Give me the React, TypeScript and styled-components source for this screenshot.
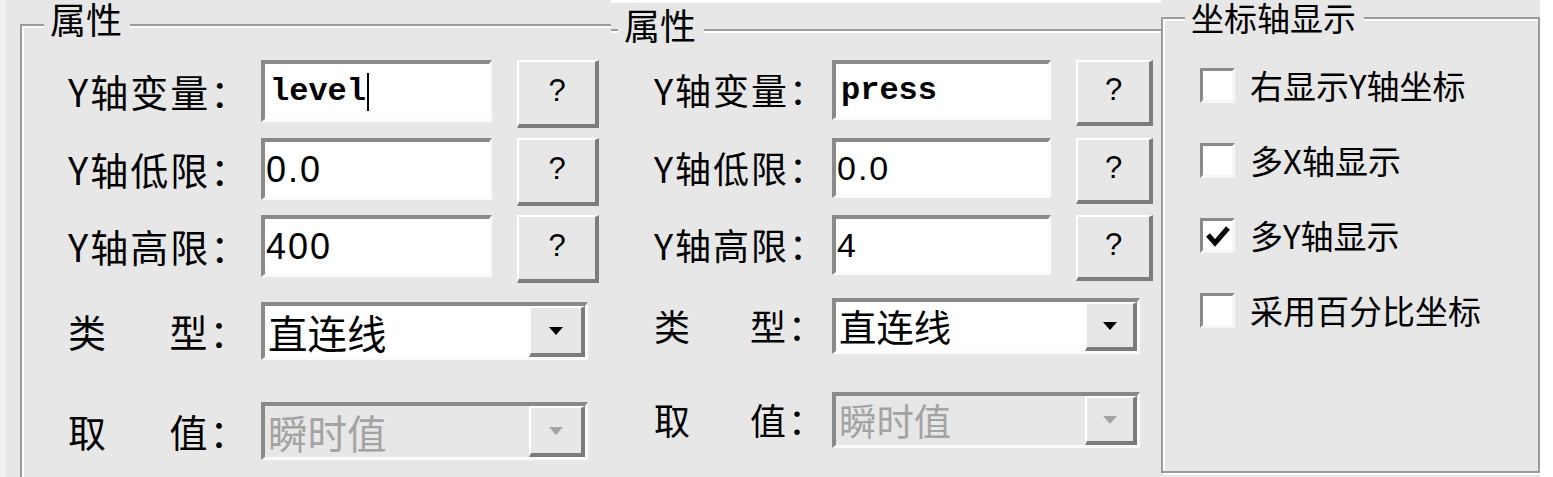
import React from 'react'
import styled, { createGlobalStyle } from 'styled-components'

const face = '#e7e7e7'
const shade = '#9c9c9c'
const light = '#ffffff'
const sunk = '#8a8a8a'
const dark = '#7c7c7c'
const cjk = '"Noto Sans CJK SC", "Liberation Sans", sans-serif'

const GlobalStyle = createGlobalStyle`
  html, body {
    margin: 0;
    padding: 0;
    background: #ffffff;
  }
  body {
    font-family: ${cjk};
  }
`

const Dialog = styled.main`
  display: flex;
  width: 1553px;
  height: 477px;
  overflow: hidden;
  box-sizing: border-box;
  border-left: 6px solid #f1f1f1;
  background: ${face};
  color: #000;
  font-family: ${cjk};
`

const Column = styled.div<{ $w: number; $pl?: number }>`
  display: flex;
  flex-direction: column;
  flex: none;
  width: ${(p) => p.$w}px;
  padding-left: ${(p) => p.$pl ?? 0}px;
  box-sizing: border-box;
`

const Margin = styled.div`
  flex: 1;
  background: #ffffff;
`

const Ledge = styled.div`
  flex: none;
  height: 3px;
  background: #ffffff;
`

const Group = styled.section<{ $size: number }>`
  display: flex;
  flex-direction: column;
  flex: 1;
  font-size: ${(p) => p.$size}px;
`

const Head = styled.header<{ $h: number }>`
  display: flex;
  align-items: flex-start;
  flex: none;
  height: ${(p) => p.$h}px;
`

const Corner = styled.span<{ $top: number; $w: number; $right?: boolean }>`
  flex: none;
  align-self: stretch;
  width: ${(p) => p.$w}px;
  margin-top: ${(p) => p.$top}px;
  border-top: 2px solid ${shade};
  ${(p) =>
    p.$right
      ? `border-right: 2px solid ${shade}; box-shadow: inset 0 2px 0 ${light}, 2px 0 0 ${light};`
      : `border-left: 2px solid ${shade}; box-shadow: inset 2px 2px 0 ${light};`}
`

const Rule = styled.span<{ $top: number; $w?: number }>`
  flex: ${(p) => (p.$w ? 'none' : '1')};
  width: ${(p) => (p.$w ? `${p.$w}px` : 'auto')};
  height: 0;
  margin-top: ${(p) => p.$top}px;
  border-top: 2px solid ${shade};
  border-bottom: 2px solid ${light};
`

const Title = styled.h2<{ $top: number; $size: number }>`
  flex: none;
  margin: ${(p) => p.$top}px 0 0 0;
  padding: 0 8px 0 6px;
  font-family: "Liberation Sans", "Noto Sans CJK SC", sans-serif;
  font-size: ${(p) => p.$size}px;
  font-weight: 400;
  line-height: ${(p) => p.$size + 4}px;
  white-space: nowrap;
`

const Body = styled.div<{ $pl: number; $open?: boolean; $boxed?: boolean }>`
  flex: 1;
  display: flex;
  flex-direction: column;
  padding-left: ${(p) => p.$pl}px;
  ${(p) =>
    p.$boxed
      ? `border: 2px solid ${shade}; border-top: 0; box-shadow: inset 2px 0 0 ${light}, 2px 2px 0 ${light}; margin-bottom: 4px;`
      : p.$open
        ? ''
        : `border-left: 2px solid ${shade}; box-shadow: inset 2px 0 0 ${light};`}
`

const Row = styled.div<{ $top: number }>`
  display: flex;
  align-items: flex-start;
  flex: none;
  margin-top: ${(p) => p.$top}px;
`

const Label = styled.label<{ $w: number; $h: number }>`
  flex: none;
  display: flex;
  align-items: center;
  width: ${(p) => p.$w}px;
  height: ${(p) => p.$h}px;
`

const LabelText = styled.span`
  display: flex;
  justify-content: space-between;
  width: 4.78em;
  letter-spacing: 2px;
  line-height: 1.2;
  white-space: nowrap;
`

const Edit = styled.div<{ $w: number; $h: number; $mono?: boolean; $digits: number }>`
  box-sizing: border-box;
  flex: none;
  display: flex;
  align-items: center;
  width: ${(p) => p.$w}px;
  height: ${(p) => p.$h}px;
  padding-left: ${(p) => (p.$mono ? 5 : 1)}px;
  background: #ffffff;
  border-style: solid;
  border-width: 4px 3px 3px 4px;
  border-color: ${sunk} #fbfbfb #fbfbfb ${sunk};
  font-family: ${(p) => (p.$mono ? '"Liberation Mono", monospace' : '"Liberation Sans", sans-serif')};
  font-size: ${(p) => (p.$mono ? 32 : p.$digits)}px;
  font-weight: ${(p) => (p.$mono ? 700 : 400)};
  letter-spacing: ${(p) => (p.$mono ? 0 : 2)}px;
  white-space: pre;
`

const Caret = styled.span`
  display: inline-block;
  width: 2px;
  height: 38px;
  margin-left: 1px;
  background: #000;
`

const HelpButton = styled.button<{ $w: number; $h: number }>`
  box-sizing: border-box;
  flex: none;
  width: ${(p) => p.$w}px;
  height: ${(p) => p.$h}px;
  margin: 0 0 0 25px;
  padding: 0 0 5px 0;
  background: ${face};
  border-style: solid;
  border-width: 2px 4px 4px 2px;
  border-color: ${light} ${dark} ${dark} ${light};
  color: #000;
  font-family: "Liberation Sans", sans-serif;
  font-size: 31px;
  line-height: 1;
`

const Combo = styled.div<{ $w: number; $h: number; $off?: boolean }>`
  box-sizing: border-box;
  flex: none;
  display: flex;
  width: ${(p) => p.$w}px;
  height: ${(p) => p.$h}px;
  background: ${(p) => (p.$off ? face : '#ffffff')};
  border-style: solid;
  border-width: 4px 3px 3px 4px;
  border-color: ${sunk} #fbfbfb #fbfbfb ${sunk};
  color: ${(p) => (p.$off ? '#a3a3a3' : '#000')};
`

const ComboText = styled.span`
  flex: 1;
  display: flex;
  align-items: center;
  padding-left: 3px;
  font-size: 1.04em;
  line-height: 1.2;
  white-space: nowrap;
`

const DropButton = styled.span<{ $w: number }>`
  box-sizing: border-box;
  flex: none;
  display: flex;
  align-items: center;
  justify-content: center;
  width: ${(p) => p.$w}px;
  background: ${face};
  border-style: solid;
  border-width: 2px 4px 4px 2px;
  border-color: ${light} ${dark} ${dark} ${light};
`

const Options = styled.ul`
  display: flex;
  flex-direction: column;
  margin: 0;
  padding: 0;
  list-style: none;
`

const Option = styled.li<{ $top: number }>`
  display: flex;
  align-items: center;
  gap: 15px;
  height: 35px;
  margin-top: ${(p) => p.$top}px;
  line-height: 1.2;
  white-space: nowrap;
`

const Box = styled.span`
  box-sizing: border-box;
  flex: none;
  display: flex;
  align-items: center;
  justify-content: center;
  width: 35px;
  height: 35px;
  background: #ffffff;
  border-style: solid;
  border-width: 3px;
  border-color: ${sunk} #f6f6f6 #f6f6f6 ${sunk};
`

const Arrow = ({ off }: { off?: boolean }) => (
  <svg width="14" height="8" viewBox="0 0 14 8">
    <polygon points="0,0 14,0 7,8" fill={off ? '#a3a3a3' : '#000'} />
  </svg>
)

const Tick = () => (
  <svg width="24" height="22" viewBox="0 0 24 22">
    <polyline points="2,10 9,18 22,3" fill="none" stroke="#000" strokeWidth="5" />
  </svg>
)

type Metrics = {
  labelW: number
  editW: number
  editH: number
  btnW: number
  btnH: number
  comboW: number
  comboH: number
  dropW: number
  digits: number
  tops: number[]
}

type Field = { label: string; value: string; mono?: boolean; caret?: boolean }

const PropertyRows = ({ m, fields, kind, rate }: { m: Metrics; fields: Field[]; kind: string; rate: string }) => (
  <>
    {fields.map((f, i) => (
      <Row key={f.label} $top={m.tops[i]}>
        <Label $w={m.labelW} $h={m.editH}>
          <LabelText>
            <span>{f.label}</span>
          </LabelText>
        </Label>
        <Edit $w={m.editW} $h={m.editH} $mono={f.mono} $digits={m.digits}>
          {f.value}
          {f.caret && <Caret />}
        </Edit>
        <HelpButton $w={m.btnW} $h={m.btnH}>?</HelpButton>
      </Row>
    ))}
    <Row $top={m.tops[3]}>
      <Label $w={m.labelW} $h={m.comboH}>
        <LabelText>
          <span>类</span>
          <span>型：</span>
        </LabelText>
      </Label>
      <Combo $w={m.comboW} $h={m.comboH}>
        <ComboText>{kind}</ComboText>
        <DropButton $w={m.dropW}>
          <Arrow />
        </DropButton>
      </Combo>
    </Row>
    <Row $top={m.tops[4]}>
      <Label $w={m.labelW} $h={m.comboH}>
        <LabelText>
          <span>取</span>
          <span>值：</span>
        </LabelText>
      </Label>
      <Combo $w={m.comboW} $h={m.comboH} $off>
        <ComboText>{rate}</ComboText>
        <DropButton $w={m.dropW}>
          <Arrow off />
        </DropButton>
      </Combo>
    </Row>
  </>
)

const left: Metrics = {
  labelW: 193,
  editW: 231,
  editH: 62,
  btnW: 82,
  btnH: 68,
  comboW: 327,
  comboH: 58,
  dropW: 56,
  digits: 36,
  tops: [8, 10, 9, 19, 42],
}

const middle: Metrics = {
  labelW: 178,
  editW: 219,
  editH: 60,
  btnW: 77,
  btnH: 66,
  comboW: 308,
  comboH: 56,
  dropW: 52,
  digits: 34,
  tops: [8, 12, 11, 17, 38],
}

const axisOptions = [
  { text: '右显示Y轴坐标', checked: false },
  { text: '多X轴显示', checked: false },
  { text: '多Y轴显示', checked: true },
  { text: '采用百分比坐标', checked: false },
]

export default function App() {
  return (
    <>
      <GlobalStyle />
      <Dialog>
        <Column $w={605} $pl={14}>
          <Group $size={38}>
            <Head $h={52}>
              <Corner $top={24} $w={22} />
              <Title $top={2} $size={36}>
                属性
              </Title>
              <Rule $top={24} />
            </Head>
            <Body $pl={46}>
              <PropertyRows
                m={left}
                kind="直连线"
                rate="瞬时值"
                fields={[
                  { label: 'Y轴变量：', value: 'level', mono: true, caret: true },
                  { label: 'Y轴低限：', value: '0.0' },
                  { label: 'Y轴高限：', value: '400' },
                ]}
              />
            </Body>
          </Group>
        </Column>

        <Column $w={550}>
          <Ledge />
          <Group $size={36}>
            <Head $h={49}>
              <Rule $top={26} $w={7} />
              <Title $top={5} $size={36}>
                属性
              </Title>
              <Rule $top={26} />
            </Head>
            <Body $pl={43} $open>
              <PropertyRows
                m={middle}
                kind="直连线"
                rate="瞬时值"
                fields={[
                  { label: 'Y轴变量：', value: 'press', mono: true },
                  { label: 'Y轴低限：', value: '0.0' },
                  { label: 'Y轴高限：', value: '4' },
                ]}
              />
            </Body>
          </Group>
        </Column>

        <Column $w={379}>
          <Group $size={33}>
            <Head $h={40}>
              <Corner $top={17} $w={22} />
              <Title $top={1} $size={33}>
                坐标轴显示
              </Title>
              <Rule $top={17} />
              <Corner $top={17} $w={4} $right />
            </Head>
            <Body $pl={37} $boxed>
              <Options>
                {axisOptions.map((o, i) => (
                  <Option key={o.text} $top={i === 0 ? 28 : 40}>
                    <Box>{o.checked && <Tick />}</Box>
                    <span>{o.text}</span>
                  </Option>
                ))}
              </Options>
            </Body>
          </Group>
        </Column>
        <Margin />
      </Dialog>
    </>
  )
}
